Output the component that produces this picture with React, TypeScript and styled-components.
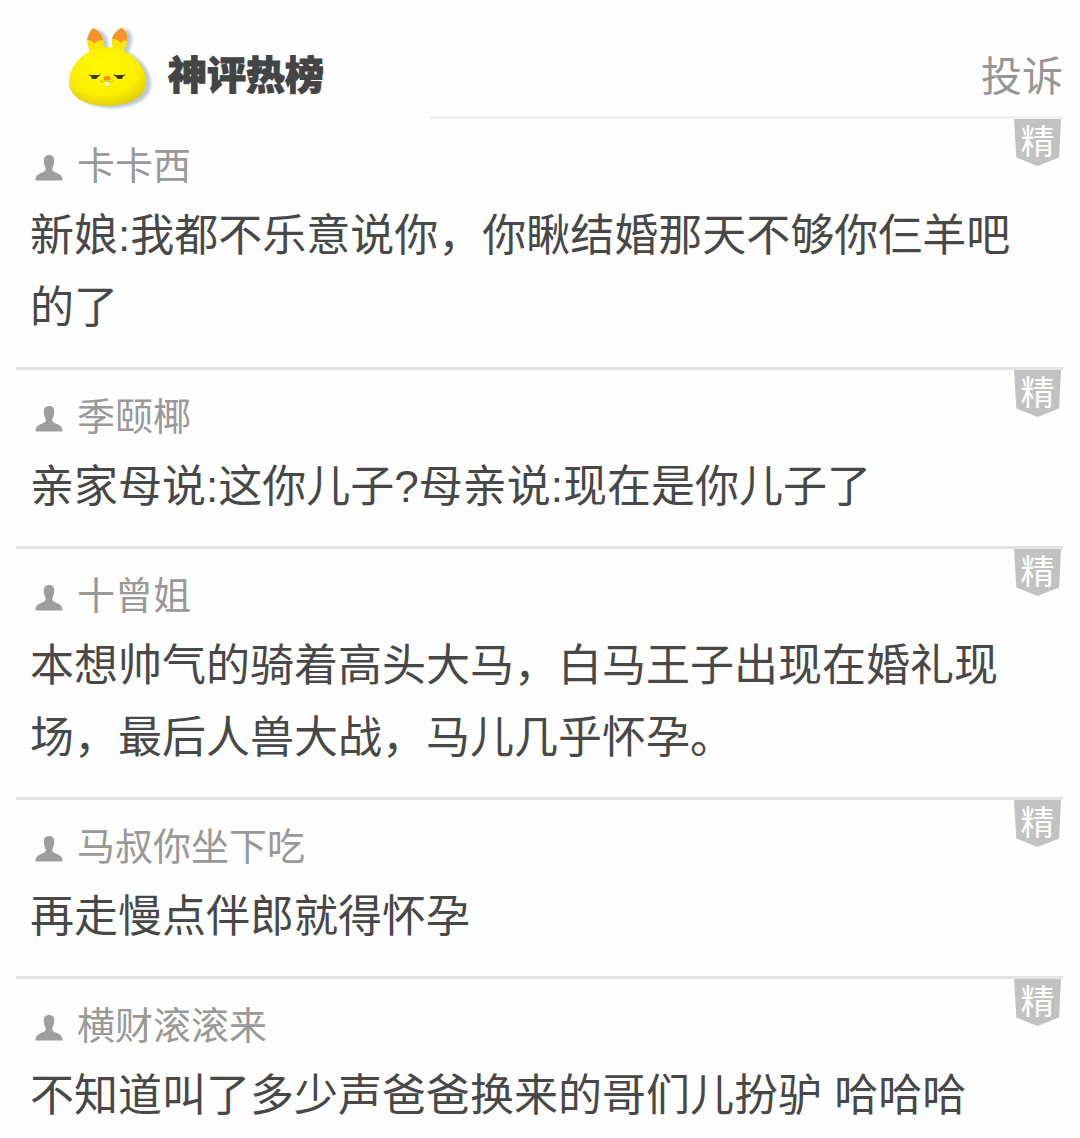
import React from "react";
import styled, { createGlobalStyle } from "styled-components";

const GlobalStyle = createGlobalStyle`
  * { box-sizing: border-box; }
  body {
    margin: 0;
    background: #fefefe;
    color: #484848;
    font-family: "Liberation Sans", "Noto Sans CJK SC", sans-serif;
  }
`;

const Page = styled.main`
  padding: 0 17px 0 16px;
  overflow: hidden;
`;

const Header = styled.header`
  display: grid;
  grid-template-columns: 414px 1fr;
  height: 119px;
`;

const Brand = styled.div`
  display: flex;
  align-items: center;
  gap: 12px;
  padding: 12px 0 0 48px;
`;

const Title = styled.h1`
  margin: 20px 0 0;
  font-size: 39px;
  line-height: 48px;
  font-weight: 900;
  color: #444;
  -webkit-text-stroke: 1px #444;
`;

const Tools = styled.div`
  display: flex;
  justify-content: flex-end;
  align-items: flex-end;
  padding-bottom: 15px;
  border-bottom: 3px solid #f1f1f1;
`;

const ReportLink = styled.a`
  font-size: 41px;
  line-height: 48px;
  color: #969696;
  text-decoration: none;
`;

const List = styled.ul`
  margin: 0;
  padding: 0;
  list-style: none;
`;

const Item = styled.li`
  position: relative;
  padding: 23px 14px 23px;
  border-bottom: 3px solid #e4e4e4;
`;

const Author = styled.div`
  display: flex;
  align-items: center;
  gap: 13px;
  padding-left: 4px;
  margin-bottom: 10px;
  font-size: 38px;
  line-height: 48px;
  color: #999;
`;

const Comment = styled.p`
  margin: 0;
  font-size: 44px;
  line-height: 72px;
`;

const Badge = styled.span`
  position: absolute;
  top: 0;
  right: 2px;
  width: 47px;
  height: 47px;
  background: #c2c2c2;
  clip-path: polygon(0 0, 100% 0, 96% 82%, 50% 100%, 5% 82%);
  color: #fff;
  font-size: 34px;
  line-height: 46px;
  text-align: center;
`;

const comments = [
  { name: "卡卡西", text: "新娘:我都不乐意说你，你瞅结婚那天不够你仨羊吧的了" },
  { name: "季颐椰", text: "亲家母说:这你儿子?母亲说:现在是你儿子了" },
  { name: "十曾姐", text: "本想帅气的骑着高头大马，白马王子出现在婚礼现场，最后人兽大战，马儿几乎怀孕。" },
  { name: "马叔你坐下吃", text: "再走慢点伴郎就得怀孕" },
  { name: "横财滚滚来", text: "不知道叫了多少声爸爸换来的哥们儿扮驴 哈哈哈" },
];

const PersonIcon = () => (
  <svg width="30" height="30" viewBox="0 0 30 30" aria-hidden="true">
    <path
      d="M15 4c3.300 0 5.200 2 5.200 5 0 2.500-.2 4.500-1.200 6.500-.5 1-.7 2-.7 3.500 1 2 4.200 2.500 6.700 4 2 1.200 3.500 2.500 3.500 6.500h-27c0-4 1.500-5.300 3.500-6.500 2.500-1.500 5.700-2 6.700-4 0-1.500-.2-2.500-.7-3.500-1-2-1.200-4-1.200-6.500 0-3 1.900-5 5.200-5z"
      fill="#9e9e9e"
    />
  </svg>
);

const Mascot = () => (
  <svg width="92" height="88" viewBox="0 0 92 88" aria-hidden="true">
    <defs>
      <radialGradient id="body" cx="0.45" cy="0.35" r="0.68">
        <stop offset="0" stopColor="#fffa00" />
        <stop offset="0.7" stopColor="#fbee00" />
        <stop offset="1" stopColor="#dfcb10" />
      </radialGradient>
      <filter id="soft" x="-20%" y="-20%" width="140%" height="140%">
        <feGaussianBlur stdDeviation="1.500" />
      </filter>
      <g id="ears">
        <path d="M25 32C26 26 23 23 23 18 24 13 26 9 29 6c5 2 9 7 10 12 1 5-1 8 0 14z" />
        <path d="M49 32c1-6-2-9-1-14C49 12 53 8 58 6c4 3 6 8 5 13-1 5-4 8-3 15z" />
      </g>
      <path
        id="head"
        d="M43 25c20 0 39 17 39 35 0 15-17 24-39 24S5 75 5 60c0-18 18-35 38-35z"
      />
    </defs>
    <g fill="#b9cbd8" filter="url(#soft)">
      <use href="#ears" x="5" y="1" />
      <use href="#head" x="5" y="2" />
    </g>
    <use href="#ears" fill="#fbe600" />
    <use href="#head" fill="url(#body)" />
    <path d="M23 18C24 13 26 9 29 6c5 2 9 7 10 12l-4 .5-5 3-3-3z" fill="#f5922a" />
    <path d="M48 17C49 12 53 8 58 6c4 3 6 8 5 13l-3-1-3 3-4-3.500z" fill="#f5922a" />
    <path d="M24 52.500q6 1 13 0l-3 2.500-2 2h-4l-1-2.500z" fill="#40360b" />
    <path d="M62 52.500q-6 1-13 0l3 2.500 2 2h4l1-2.500z" fill="#40360b" />
    <ellipse cx="43" cy="56.500" rx="3.500" ry="2.500" fill="#f6911e" />
    <path d="M36 59q4 2 7-1 3 3 7 1" fill="none" stroke="#e3cf00" strokeWidth="1.500" />
    <path d="M40.500 60h5l-1 3.500h-3z" fill="#f3f3df" />
  </svg>
);

export default function App() {
  return (
    <>
      <GlobalStyle />
      <Page>
        <Header>
          <Brand>
            <Mascot />
            <Title>神评热榜</Title>
          </Brand>
          <Tools>
            <ReportLink href="#report">投诉</ReportLink>
          </Tools>
        </Header>
        <List>
          {comments.map((c) => (
            <Item key={c.name}>
              <Author>
                <PersonIcon />
                <span>{c.name}</span>
              </Author>
              <Comment>{c.text}</Comment>
              <Badge>精</Badge>
            </Item>
          ))}
        </List>
      </Page>
    </>
  );
}
